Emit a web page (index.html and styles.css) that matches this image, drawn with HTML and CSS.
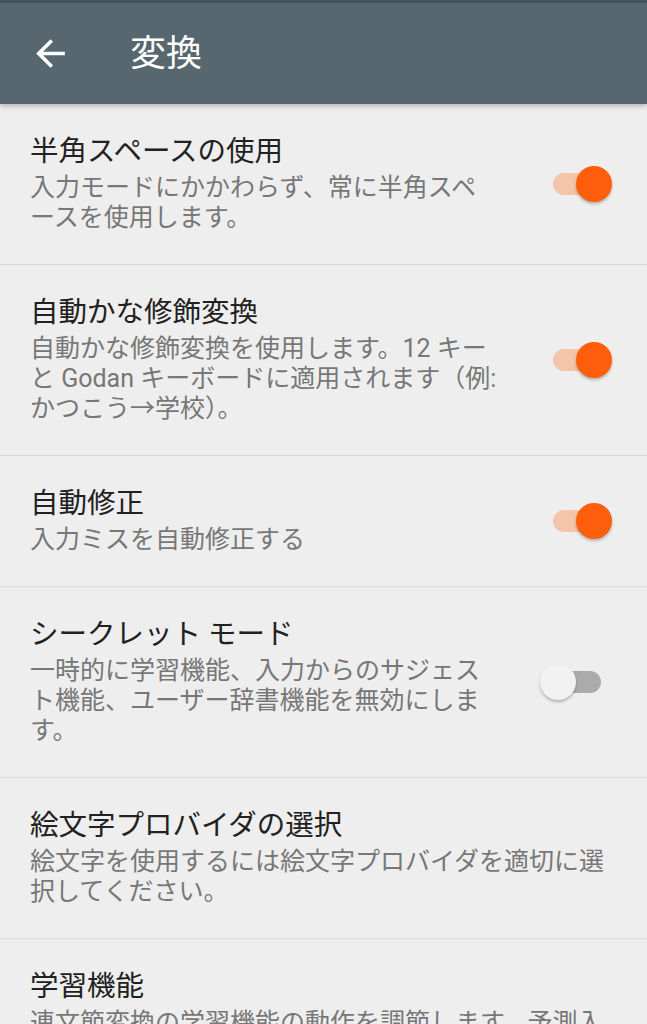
FILE: index.html
```html
<!DOCTYPE html>
<html lang="ja">

<head>
  <meta charset="UTF-8">
  <meta name="viewport" content="width=device-width, initial-scale=1.0">
  <title>変換</title>
  <link rel="stylesheet" href="styles.css">
</head>

<body>
  <div class="status-bar"></div>
  <div class="toolbar">
    <div class="back">
      <svg width="43" height="43" viewBox="0 0 24 24">
        <path d="M20 11H7.83l5.59-5.59L12 4l-8 8 8 8 1.41-1.41L7.83 13H20v-2z" fill="#fff"/>
      </svg>
    </div>
    <div class="toolbar-title">変換</div>
  </div>

  <ul class="prefs">
    <li class="pref">
      <div class="pref-text">
        <div class="pref-title">半角スペースの使用</div>
        <div class="pref-desc">入力モードにかかわらず、常に半角スペースを使用します。</div>
      </div>
      <div class="switch on">
        <div class="track"></div>
        <div class="thumb"></div>
      </div>
    </li>
    <li class="pref">
      <div class="pref-text">
        <div class="pref-title">自動かな修飾変換</div>
        <div class="pref-desc">自動かな修飾変換を使用します。12 キーと Godan キーボードに適用されます（例: かつこう→学校）。</div>
      </div>
      <div class="switch on">
        <div class="track"></div>
        <div class="thumb"></div>
      </div>
    </li>
    <li class="pref">
      <div class="pref-text">
        <div class="pref-title">自動修正</div>
        <div class="pref-desc">入力ミスを自動修正する</div>
      </div>
      <div class="switch on">
        <div class="track"></div>
        <div class="thumb"></div>
      </div>
    </li>
    <li class="pref">
      <div class="pref-text">
        <div class="pref-title">シークレット モード</div>
        <div class="pref-desc">一時的に学習機能、入力からのサジェスト機能、ユーザー辞書機能を無効にします。</div>
      </div>
      <div class="switch">
        <div class="track"></div>
        <div class="thumb"></div>
      </div>
    </li>
    <li class="pref">
      <div class="pref-text">
        <div class="pref-title">絵文字プロバイダの選択</div>
        <div class="pref-desc">絵文字を使用するには絵文字プロバイダを適切に選択してください。</div>
      </div>
    </li>
    <li class="pref">
      <div class="pref-text">
        <div class="pref-title">学習機能</div>
        <div class="pref-desc">連文節変換の学習機能の動作を調節します。予測入力の候補にも影響します。</div>
      </div>
    </li>
  </ul>
</body>

</html>
```

FILE: styles.css
```css
body {
  margin: 0;
  background-color: #eeeeee;
  font-family: Roboto, "Noto Sans CJK JP", sans-serif;
}

.status-bar {
  height: 3px;
  background-color: #44555c;
}

.toolbar {
  position: relative;
  display: flex;
  align-items: center;
  height: 101px;
  background-color: #56676f;
  box-shadow: 0 2px 5px rgba(0, 0, 0, 0.25);
}

.toolbar .back {
  display: flex;
  margin-left: 29px;
  width: 43px;
  height: 43px;
}

.toolbar-title {
  margin-left: 58px;
  color: #fff;
  font-size: 36px;
  line-height: 40px;
}

.prefs {
  margin: 0;
  padding: 0;
  list-style: none;
}

.pref {
  display: flex;
  align-items: center;
  gap: 40px;
  padding: 30px 35px 31px 30px;
  border-bottom: 1px solid #d8d8d8;
}

.pref-text {
  flex: 1;
}

.pref-title {
  margin-bottom: 3px;
  color: #212121;
  font-size: 28.5px;
  line-height: 36px;
}

.pref-desc {
  color: #777777;
  font-size: 25px;
  line-height: 30px;
}

/* material style switch */
.switch {
  position: relative;
  flex: none;
  width: 72px;
  height: 36px;
}

.switch .track {
  position: absolute;
  top: 7px;
  left: 13px;
  width: 48px;
  height: 22px;
  border-radius: 11px;
  background-color: #ababab;
}

.switch .thumb {
  position: absolute;
  top: 0;
  left: 0;
  width: 36px;
  height: 36px;
  border-radius: 50%;
  background-color: #f2f2f2;
  box-shadow: 0 2px 3px rgba(0, 0, 0, 0.25);
}

.switch.on .track {
  background-color: #f6c4a8;
}

.switch.on .thumb {
  left: 36px;
  background-color: #ff5f0c;
}
```
